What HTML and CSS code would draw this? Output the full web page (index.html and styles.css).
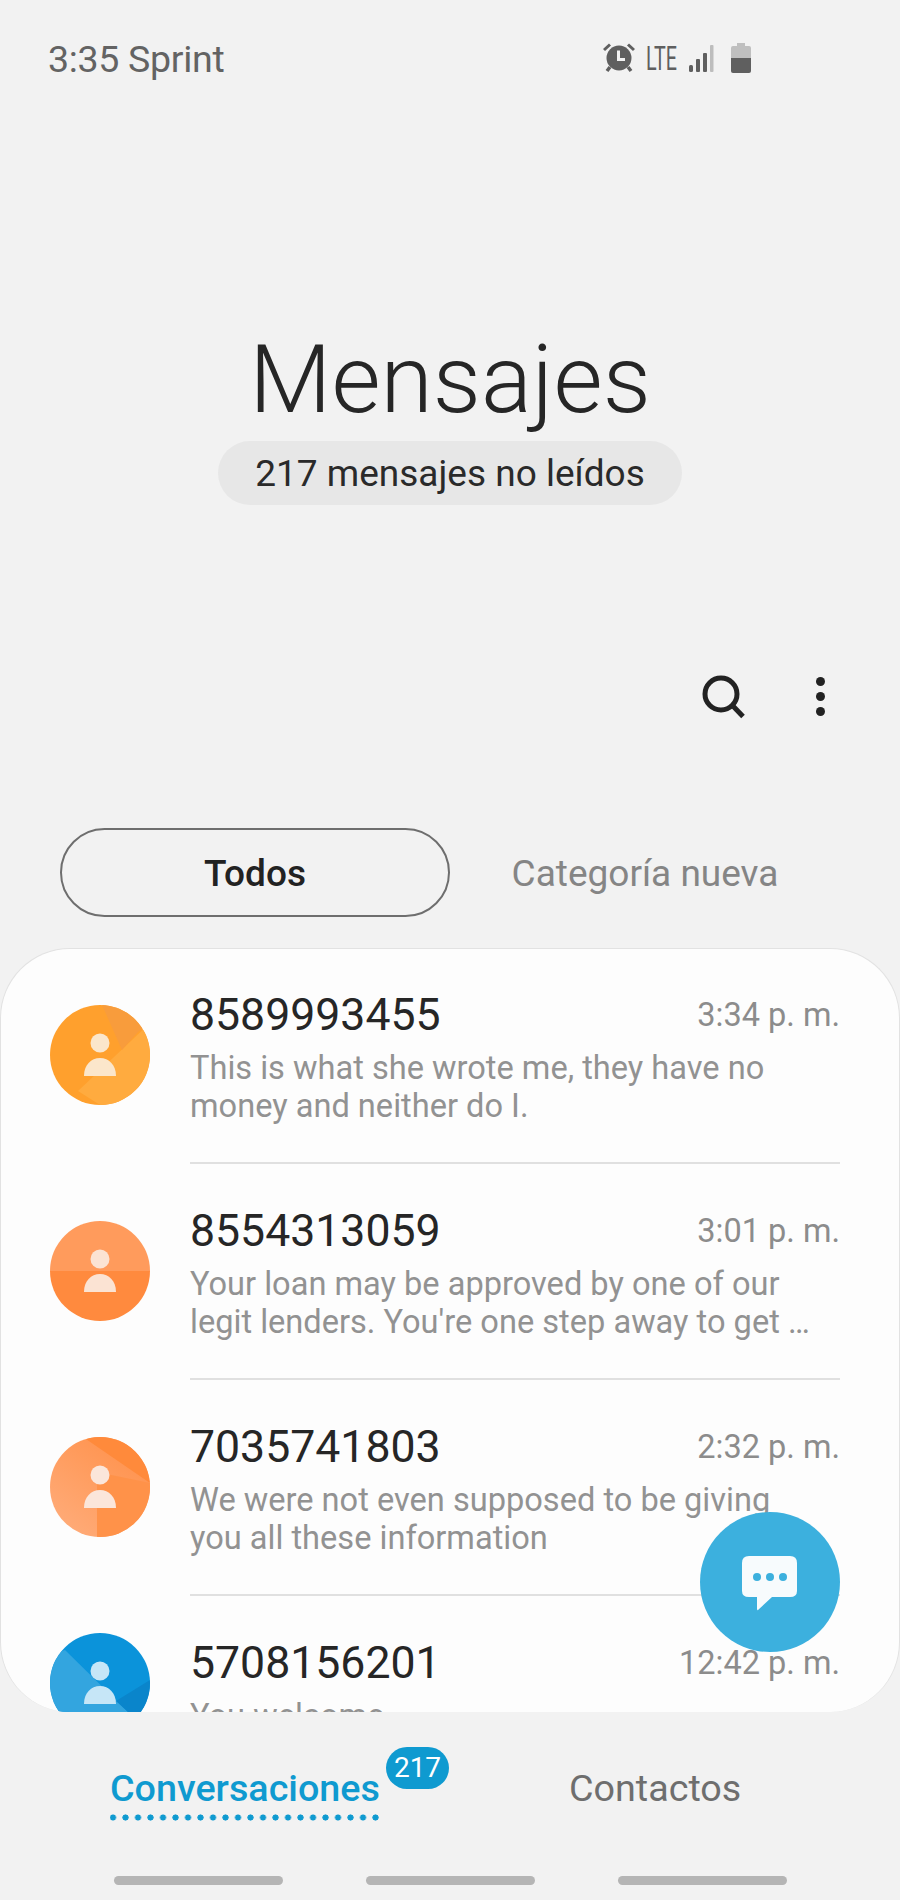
FILE: index.html
```html
<!DOCTYPE html>
<html lang="es">
<head>
    <meta charset="UTF-8">
    <meta name="viewport" content="width=device-width, initial-scale=1.0">
    <title>Mensajes</title>
    <link rel="stylesheet" href="styles.css">
</head>
<body>
    <div class="screen">
        <!-- Status bar -->
        <div class="status-bar">
            <span class="status-text">3:35 Sprint</span>
            <div class="status-icons">
                <svg class="icon-alarm" viewBox="0 0 32 30" width="32" height="30">
                    <path d="M1 7 L7 1.500 M31 7 L25 1.500" stroke="#5f5f5f" stroke-width="3" fill="none"/>
                    <path d="M7 24 L4 28 M25 24 L28 28" stroke="#5f5f5f" stroke-width="3.500" fill="none"/>
                    <circle cx="16" cy="15" r="12.500" fill="#5f5f5f"/>
                    <path d="M15.500 7.500 V16.500 H22" stroke="#f2f2f2" stroke-width="3" fill="none"/>
                </svg>
                <span class="lte">LTE</span>
                <svg class="icon-signal" viewBox="0 0 27 28" width="27" height="28">
                    <rect x="0" y="21" width="4" height="7" rx="1.500" fill="#5f5f5f"/>
                    <rect x="7" y="15" width="4" height="13" rx="1" fill="#5f5f5f"/>
                    <rect x="14" y="9" width="4" height="19" rx="1" fill="#5f5f5f"/>
                    <rect x="21" y="1" width="3.500" height="27" rx="1" fill="#bdbdbd"/>
                </svg>
                <svg class="icon-battery" viewBox="0 0 20 30" width="20" height="30">
                    <path d="M6 0 H14 V3 H18 Q20 3 20 5 V15 H0 V5 Q0 3 2 3 H6 Z" fill="#bfbfbf"/>
                    <path d="M0 15 H20 V28 Q20 30 18 30 H2 Q0 30 0 28 Z" fill="#5f5f5f"/>
                </svg>
            </div>
        </div>

        <!-- Title -->
        <div class="title-block">
            <h1 class="title">Mensajes</h1>
            <div class="unread-pill">217 mensajes no leídos</div>
        </div>

        <!-- Actions -->
        <div class="actions">
            <svg class="icon-search" viewBox="0 0 44 44" width="44" height="44">
                <circle cx="19" cy="19" r="16" stroke="#222" stroke-width="5" fill="none"/>
                <path d="M30.500 30.500 L41 41.500" stroke="#222" stroke-width="5" fill="none"/>
            </svg>
            <div class="more-dots"><i></i><i></i><i></i></div>
        </div>

        <!-- Tabs -->
        <div class="tabs">
            <div class="tab tab-active">Todos</div>
            <div class="tab">Categoría nueva</div>
        </div>

        <!-- Conversations -->
        <div class="list-wrap">
            <div class="list">
                <div class="row">
                    <svg class="avatar" viewBox="0 0 100 100">
                        <defs><clipPath id="c1"><circle cx="50" cy="50" r="50"/></clipPath></defs>
                        <g clip-path="url(#c1)">
                            <rect width="100" height="100" fill="#ffa02d"/>
                            <polygon points="100,18 28,86 50,100 100,100" fill="#ffab3f"/>
                            <polygon points="52,0 100,0 100,18 88,27 72,45" fill="#f89c3c"/>
                        </g>
                        <circle cx="50" cy="38" r="9.500" fill="#fbe6cb"/>
                        <path d="M34 71 C34 60 41 53 50 53 C59 53 66 60 66 71 Z" fill="#fbe6cb"/>
                    </svg>
                    <div class="row-body">
                        <div class="row-head"><span class="name">8589993455</span><span class="time">3:34 p. m.</span></div>
                        <div class="preview">This is what she wrote me, they have no<br>money and neither do I.</div>
                    </div>
                </div>
                <div class="row">
                    <svg class="avatar" viewBox="0 0 100 100">
                        <defs><clipPath id="c2"><circle cx="50" cy="50" r="50"/></clipPath></defs>
                        <g clip-path="url(#c2)">
                            <rect width="100" height="50" fill="#ff9b5c"/>
                            <rect y="50" width="100" height="50" fill="#ff8a3e"/>
                        </g>
                        <circle cx="50" cy="38" r="9.500" fill="#fbe3d3"/>
                        <path d="M34 71 C34 60 41 53 50 53 C59 53 66 60 66 71 Z" fill="#fbe3d3"/>
                    </svg>
                    <div class="row-body">
                        <div class="row-head"><span class="name">8554313059</span><span class="time">3:01 p. m.</span></div>
                        <div class="preview">Your loan may be approved by one of our<br>legit lenders. You're one step away to get …</div>
                    </div>
                </div>
                <div class="row">
                    <svg class="avatar" viewBox="0 0 100 100">
                        <defs>
                            <clipPath id="c3"><circle cx="50" cy="50" r="50"/></clipPath>
                            <linearGradient id="g3" x1="0.7" y1="0.1" x2="0.1" y2="0.9">
                                <stop offset="0" stop-color="#ff9450"/>
                                <stop offset="1" stop-color="#ffab78"/>
                            </linearGradient>
                        </defs>
                        <g clip-path="url(#c3)">
                            <rect width="100" height="100" fill="url(#g3)"/>
                            <polygon points="47,35 100,46 100,100 47,100" fill="#ff9249"/>
                            <polygon points="33,0 100,0 100,46" fill="#ff8a3b"/>
                        </g>
                        <circle cx="50" cy="38" r="9.500" fill="#fbe6da"/>
                        <path d="M34 71 C34 60 41 53 50 53 C59 53 66 60 66 71 Z" fill="#fbe6da"/>
                    </svg>
                    <div class="row-body">
                        <div class="row-head"><span class="name">7035741803</span><span class="time">2:32 p. m.</span></div>
                        <div class="preview">We were not even supposed to be giving<br>you all these information</div>
                    </div>
                </div>
                <div class="row">
                    <svg class="avatar avatar-raised" viewBox="0 0 100 100">
                        <defs><clipPath id="c4"><circle cx="50" cy="50" r="50"/></clipPath></defs>
                        <g clip-path="url(#c4)">
                            <rect width="100" height="100" fill="#0b93da"/>
                            <polygon points="0,22 15,17 78,79 78,100 0,100" fill="#33a5df"/>
                            <polygon points="100,47 66,68 78,79 78,100 100,100" fill="#0a85cb"/>
                        </g>
                        <circle cx="50" cy="38" r="9.500" fill="#c6e6f7"/>
                        <path d="M34 71 C34 60 41 53 50 53 C59 53 66 60 66 71 Z" fill="#c6e6f7"/>
                    </svg>
                    <div class="row-body">
                        <div class="row-head"><span class="name">5708156201</span><span class="time">12:42 p. m.</span></div>
                        <div class="preview">You welcome</div>
                    </div>
                </div>
            </div>

            <div class="fab">
                <svg viewBox="0 0 56 56" width="56" height="56">
                    <path d="M7 0 H48 Q55 0 55 7 V35 Q55 41 48 41 H30 L16 54 Q15.500 55 15 53 V41 H7 Q0 41 0 35 V7 Q0 0 7 0 Z" fill="#f7fbfd"/>
                    <circle cx="15" cy="21" r="4" fill="#3cb0de"/>
                    <circle cx="28" cy="21" r="4" fill="#3cb0de"/>
                    <circle cx="41" cy="21" r="4" fill="#3cb0de"/>
                </svg>
            </div>
        </div>

        <!-- Bottom tabs -->
        <div class="bottom-tabs">
            <div class="bottom-tab">
                <span class="bottom-label">Conversaciones</span>
                <span class="badge">217</span>
            </div>
            <div class="bottom-tab"><span class="bottom-label-plain">Contactos</span></div>
        </div>

        <!-- Gesture bars -->
        <div class="gesture-bars"><i></i><i></i><i></i></div>
    </div>
</body>
</html>
```

FILE: styles.css
```css
* {
    margin: 0;
    padding: 0;
    box-sizing: border-box;
}

body {
    background-color: #f2f2f2;
    color: #222;
    font-family: Roboto, "Liberation Sans", sans-serif;
}

.screen {
    width: 900px;
    height: 1900px;
    overflow: hidden;
    display: flex;
    flex-direction: column;
}

/* Status bar */
.status-bar {
    height: 120px;
    padding: 38px 149px 0 48px;
    display: flex;
    justify-content: space-between;
    align-items: flex-start;
}

.status-text {
    font-size: 37.500px;
    line-height: 42px;
    color: #636363;
    letter-spacing: -0.3px;
}

.status-icons {
    display: flex;
    align-items: center;
    height: 30px;
    margin-top: 5px;
}

.icon-alarm {
    margin-right: 11px;
}

.lte {
    display: inline-block;
    width: 30px;
    font-size: 34px;
    line-height: 30px;
    color: #5f5f5f;
    transform: scaleX(0.58);
    transform-origin: left center;
    margin-right: 13px;
}

.icon-signal {
    margin-right: 15px;
}

/* Title */
.title-block {
    display: flex;
    flex-direction: column;
    align-items: center;
    padding-top: 204px;
    height: 385px;
}

.title {
    font-size: 95px;
    line-height: 111px;
    font-weight: 300;
    color: #262626;
    margin-bottom: 6px;
}

.unread-pill {
    width: 464px;
    height: 64px;
    padding-top: 1px;
    border-radius: 32px;
    background-color: #e7e7e7;
    font-size: 37px;
    line-height: 64px;
    text-align: center;
    color: #2a2a2a;
}

/* Actions */
.actions {
    height: 323px;
    padding: 170px 75px 0 0;
    display: flex;
    justify-content: flex-end;
    align-items: flex-start;
}

.icon-search {
    margin-right: 70px;
}

.more-dots {
    display: flex;
    flex-direction: column;
    gap: 6px;
    padding-top: 2px;
}

.more-dots i {
    display: block;
    width: 9px;
    height: 9px;
    border-radius: 50%;
    background-color: #222;
}

/* Tabs */
.tabs {
    height: 120px;
    padding: 0 60px;
    display: flex;
    align-items: flex-start;
}

.tab {
    flex: 1;
    height: 89px;
    line-height: 91px;
    text-align: center;
    font-size: 37px;
    color: #858585;
}

.tab-active {
    flex: none;
    width: 390px;
    border: 2px solid #6e6e6e;
    border-radius: 45px;
    line-height: 87px;
    color: #222;
    font-weight: 500;
}

/* Conversation list */
.list-wrap {
    position: relative;
    height: 764px;
    flex: none;
}

.list {
    height: 100%;
    overflow: hidden;
    background-color: #fdfdfd;
    border: 1px solid #e2e2e2;
    border-bottom: none;
    border-radius: 70px;
}

.row {
    display: flex;
    height: 216px;
    padding: 56px 59px 0 49px;
}

.avatar {
    flex: none;
    width: 100px;
    height: 100px;
    margin-right: 40px;
}

.avatar-raised {
    margin-top: -20px;
}

.row-body {
    flex: 1;
    height: 175px;
    margin-top: -16px;
    border-bottom: 2px solid #e0e0e0;
}

.row-head {
    display: flex;
    justify-content: space-between;
    align-items: center;
    height: 52px;
}

.name {
    font-size: 44.600px;
    line-height: 52px;
    color: #262626;
}

.time {
    font-size: 32.500px;
    line-height: 52px;
    color: #8c8c8c;
}

.preview {
    margin-top: 8px;
    font-size: 32.600px;
    line-height: 38px;
    color: #929292;
    white-space: nowrap;
}

.fab {
    position: absolute;
    top: 564px;
    left: 700px;
    width: 140px;
    height: 140px;
    border-radius: 50%;
    background-color: #3cb0de;
    display: flex;
    align-items: center;
    justify-content: center;
}

.fab svg {
    margin-top: 4px;
}

/* Bottom tabs */
.bottom-tabs {
    height: 164px;
    display: flex;
    position: relative;
}

.bottom-tab {
    flex: none;
    position: relative;
    padding-top: 54px;
    padding-left: 110px;
    width: 459px;
}

.bottom-label {
    display: block;
    width: 269px;
    height: 55px;
    font-size: 37.700px;
    line-height: 44px;
    font-weight: 500;
    color: #0f9ad0;
    white-space: nowrap;
    background-image: radial-gradient(circle, #0f9ad0 2.800px, transparent 3.300px);
    background-size: 12.500px 7px;
    background-repeat: repeat-x;
    background-position: -3.250px bottom;
}

.bottom-label-plain {
    font-size: 37.700px;
    line-height: 44px;
    color: #6e6e6e;
}

.badge {
    position: absolute;
    top: 35px;
    left: 386px;
    width: 63px;
    height: 42px;
    border-radius: 21px;
    background-color: #0f9ad0;
    color: #fff;
    font-size: 28px;
    line-height: 42px;
    text-align: center;
}

/* Gesture bars */
.gesture-bars {
    display: flex;
    justify-content: center;
    gap: 83px;
}

.gesture-bars i {
    display: block;
    width: 169px;
    height: 9px;
    border-radius: 5px;
    background-color: #b5b5b5;
}
```
